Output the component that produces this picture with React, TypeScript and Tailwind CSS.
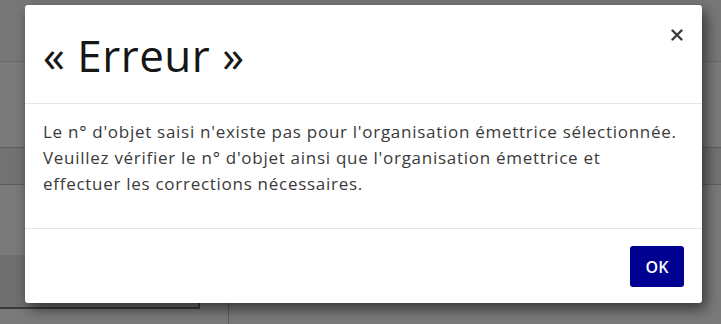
import React from "react";

export default function App() {
  return (
    <div
      className="relative w-[721px] h-[324px] overflow-hidden bg-[#7a7a7a]"
      style={{ fontFamily: '"Open Sans", "Noto Sans", sans-serif' }}
    >
      {/* obscured page behind the overlay */}
      <div className="flex flex-col">
        <div className="h-[62px] border-b border-[#6a6a6a] bg-[#777777]" />
        <div className="h-[85px]" />
        <div className="h-[38px] border-y border-[#5e5e5e] bg-[#727272]" />
        <div className="h-[70px]" />
        <div className="flex h-[69px]">
          <div className="w-[200px] h-[54px] border-b-2 border-r-2 border-[#3a3a3a] bg-[#6f6f6f]" />
          <div className="w-[28px]" />
          <div className="flex-1 border-l border-[#5e5e5e]" />
        </div>
      </div>

      {/* modal */}
      <div className="absolute left-[25px] top-[5px] w-[677px] h-[298px] rounded-[3px] bg-white flex flex-col shadow-[4px_6px_14px_rgba(0,0,0,0.55)]">
        <div className="relative h-[99px] border-b border-[#e5e5e5] flex items-center pl-[18px]">
          <h1 className="text-[44px] leading-none font-normal text-[#161616] tracking-[0.5px] mt-[2px]">
            « Erreur »
          </h1>
          <button className="absolute right-[18px] top-[23px] w-[14px] h-[14px] flex items-center justify-center text-[#3a3a3a]">
            <svg width="12" height="12" viewBox="0 0 12 12">
              <path d="M1.5 1.5 L10.5 10.5 M10.5 1.5 L1.5 10.5" stroke="currentColor" strokeWidth="2.4" strokeLinecap="round" />
            </svg>
          </button>
        </div>
        <div className="h-[125px] border-b border-[#e5e5e5] pl-[18px] pr-[10px] pt-[15px]">
          <p className="text-[17px] leading-[26px] tracking-[0.72px] text-[#3a3a3a] whitespace-nowrap">
            Le n° d'objet saisi n'existe pas pour l'organisation émettrice sélectionnée.
            <br />
            Veuillez vérifier le n° d'objet ainsi que l'organisation émettrice et
            <br />
            effectuer les corrections nécessaires.
          </p>
        </div>
        <div className="flex-1 flex justify-end items-start pt-[17px] pr-[18px]">
          <button className="w-[54px] h-[41px] rounded-[3px] bg-[#000091] text-white text-[16px] font-semibold flex items-center justify-center">
            OK
          </button>
        </div>
      </div>
    </div>
  );
}
